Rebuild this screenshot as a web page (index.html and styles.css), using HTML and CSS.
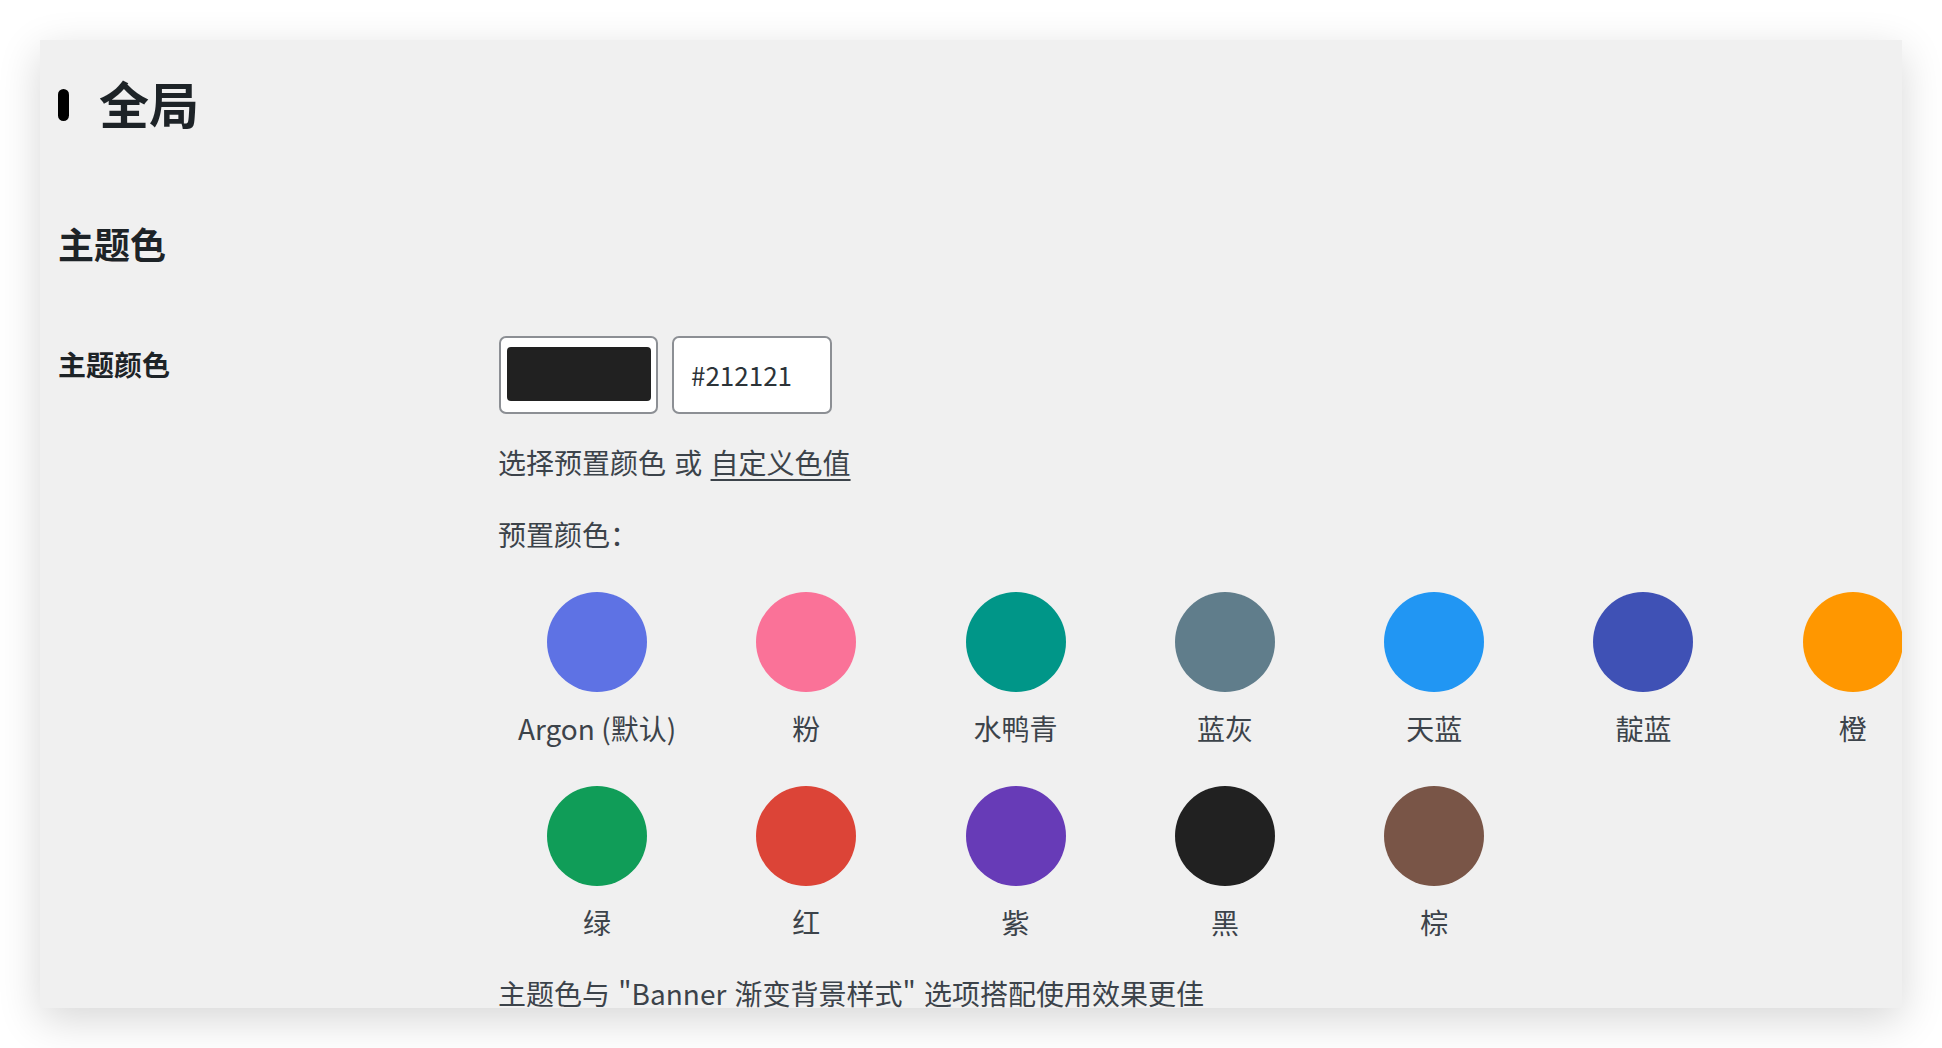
FILE: index.html
```html
<!DOCTYPE html>
<html lang="zh-CN">
<head>
<meta charset="utf-8">
<title>全局</title>
<link rel="stylesheet" href="styles.css">
</head>
<body>
<div class="card">
  <h1 class="section-title"><span class="pill"></span><span>全局</span></h1>
  <h2 class="group-title">主题色</h2>
  <div class="form-row">
    <div class="form-label">主题颜色</div>
    <div class="form-field">
      <div class="picker">
        <div class="swatch-box"><div class="swatch"></div></div>
        <div class="hex-input">#212121</div>
      </div>
      <p class="line first">选择预置颜色 或 <a class="link" href="#">自定义色值</a></p>
      <p class="line second">预置颜色：</p>
      <div class="presets">
        <div class="preset"><span class="dot" style="background:#5e72e4"></span><span class="name">Argon (默认)</span></div>
        <div class="preset"><span class="dot" style="background:#fa7298"></span><span class="name">粉</span></div>
        <div class="preset"><span class="dot" style="background:#009688"></span><span class="name">水鸭青</span></div>
        <div class="preset"><span class="dot" style="background:#607d8b"></span><span class="name">蓝灰</span></div>
        <div class="preset"><span class="dot" style="background:#2196f3"></span><span class="name">天蓝</span></div>
        <div class="preset"><span class="dot" style="background:#3f51b5"></span><span class="name">靛蓝</span></div>
        <div class="preset"><span class="dot" style="background:#ff9700"></span><span class="name">橙</span></div>
        <div class="preset"><span class="dot" style="background:#109d58"></span><span class="name">绿</span></div>
        <div class="preset"><span class="dot" style="background:#dc4437"></span><span class="name">红</span></div>
        <div class="preset"><span class="dot" style="background:#673bb7"></span><span class="name">紫</span></div>
        <div class="preset"><span class="dot" style="background:#212121"></span><span class="name">黑</span></div>
        <div class="preset"><span class="dot" style="background:#795547"></span><span class="name">棕</span></div>
      </div>
      <p class="line note">主题色与 "Banner 渐变背景样式" 选项搭配使用效果更佳</p>
    </div>
  </div>
</div>
</body>
</html>
```
FILE: styles.css
```css
html, body {
  margin: 0;
  padding: 0;
  background: #ffffff;
}

body {
  font-family: "Noto Sans CJK SC", "Noto Sans", sans-serif;
  color: #3c434a;
  height: 1048px;
  overflow: hidden;
}

.card {
  margin: 40px 40px 0 40px;
  height: 968px;
  box-sizing: border-box;
  padding: 32px 0 0 18px;
  background: #f0f0f0;
  overflow: hidden;
  box-shadow: 0 12px 40px rgba(0, 0, 0, 0.16);
}

.section-title {
  margin: 0;
  display: flex;
  align-items: center;
  gap: 30px;
  height: 60px;
  font-size: 50px;
  line-height: 60px;
  font-weight: 700;
  color: #1d2327;
}

.pill {
  display: block;
  width: 11px;
  height: 32px;
  border-radius: 6px;
  background: #000;
  margin-top: 6px;
}

.group-title {
  margin: 86px 0 0 0;
  font-size: 36px;
  line-height: 50px;
  font-weight: 700;
  color: #1d2327;
}

.form-row {
  margin-top: 68px;
  display: grid;
  grid-template-columns: 440px 1fr;
}

.form-label {
  padding-top: 8px;
  font-size: 28px;
  line-height: 40px;
  font-weight: 700;
  color: #1d2327;
}

.form-field {
  min-width: 0;
}

.picker {
  display: flex;
  gap: 14px;
  margin-left: 1px;
}

.swatch-box {
  width: 159px;
  height: 78px;
  box-sizing: border-box;
  border: 2px solid #8c8f94;
  border-radius: 7px;
  background: #ffffff;
  padding: 9px 6px;
}

.swatch {
  width: 144px;
  height: 54px;
  border-radius: 4px;
  background: #212121;
}

.hex-input {
  width: 160px;
  height: 78px;
  box-sizing: border-box;
  border: 2px solid #8c8f94;
  border-radius: 7px;
  background: #ffffff;
  padding-left: 17px;
  font-size: 26px;
  line-height: 74px;
  color: #2c3338;
}

.line {
  margin: 0;
  font-size: 28px;
  line-height: 40px;
  color: #3c434a;
  word-spacing: 2px;
}

.line.first {
  margin-top: 28px;
}

.line.second {
  margin-top: 32px;
}

.link {
  color: #3c434a;
  text-decoration: underline;
  text-underline-offset: 5px;
  text-decoration-thickness: 2px;
}

.presets {
  margin-top: 38px;
  display: grid;
  grid-template-columns: repeat(7, 198px);
  column-gap: 11.3px;
  row-gap: 38px;
}

.preset {
  display: flex;
  flex-direction: column;
  align-items: center;
}

.dot {
  display: block;
  width: 100px;
  height: 100px;
  border-radius: 50%;
}

.name {
  margin-top: 16px;
  font-size: 28px;
  line-height: 40px;
  white-space: nowrap;
  color: #3c434a;
}

.line.note {
  margin-top: 31px;
}
```
